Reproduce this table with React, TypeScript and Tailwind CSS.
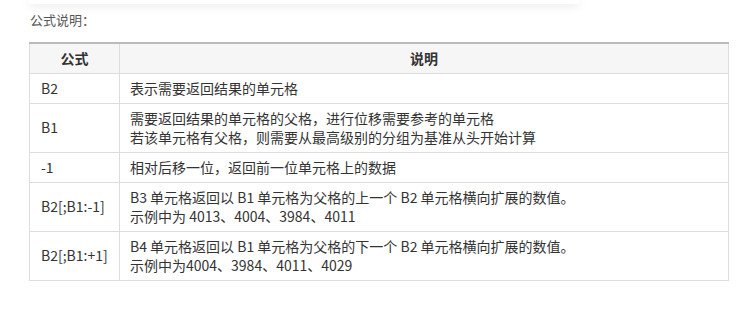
import React from 'react';

const rows: { formula: string; lines: string[] }[] = [
  { formula: 'B2', lines: ['表示需要返回结果的单元格'] },
  {
    formula: 'B1',
    lines: ['需要返回结果的单元格的父格，进行位移需要参考的单元格', '若该单元格有父格，则需要从最高级别的分组为基准从头开始计算'],
  },
  { formula: '-1', lines: ['相对后移一位，返回前一位单元格上的数据'] },
  {
    formula: 'B2[;B1:-1]',
    lines: ['B3 单元格返回以 B1 单元格为父格的上一个 B2 单元格横向扩展的数值。', '示例中为 4013、4004、3984、4011'],
  },
  {
    formula: 'B2[;B1:+1]',
    lines: ['B4 单元格返回以 B1 单元格为父格的下一个 B2 单元格横向扩展的数值。', '示例中为4004、3984、4011、4029'],
  },
];

export default function App() {
  return (
    <div
      className="w-[747px] h-[324px] bg-white text-[14px] text-[#333] overflow-hidden"
      style={{ fontFamily: '"Noto Sans CJK SC", "Noto Sans", sans-serif' }}
    >
      <div className="ml-[29px] w-[550px] h-[4px] bg-white shadow-[0_2px_8px_rgba(0,0,0,0.12)]" />

      <div className="pl-[30px] pt-[6px] leading-[19px] text-[13px] text-[#555]">公式说明：</div>

      <table className="ml-[29px] mt-[13px] w-[700px] border-collapse">
        <thead>
          <tr className="bg-[#f6f6f6]">
            <th className="w-[90px] h-[30px] p-0 border border-[#ddd] border-t-[#bbb] border-t-2 leading-[19px] font-bold text-center">
              公式
            </th>
            <th className="h-[30px] p-0 border border-[#ddd] border-t-[#bbb] border-t-2 leading-[19px] font-bold text-center">
              说明
            </th>
          </tr>
        </thead>
        <tbody>
          {rows.map((row) => (
            <tr key={row.formula}>
              <td className="border border-[#ddd] px-[11px] py-[5px] leading-[19px] align-middle">{row.formula}</td>
              <td className="border border-[#ddd] px-[10px] py-[5px] leading-[19px]">
                {row.lines.map((line) => (
                  <div key={line} className="h-[19px]">
                    {line}
                  </div>
                ))}
              </td>
            </tr>
          ))}
        </tbody>
      </table>
    </div>
  );
}
